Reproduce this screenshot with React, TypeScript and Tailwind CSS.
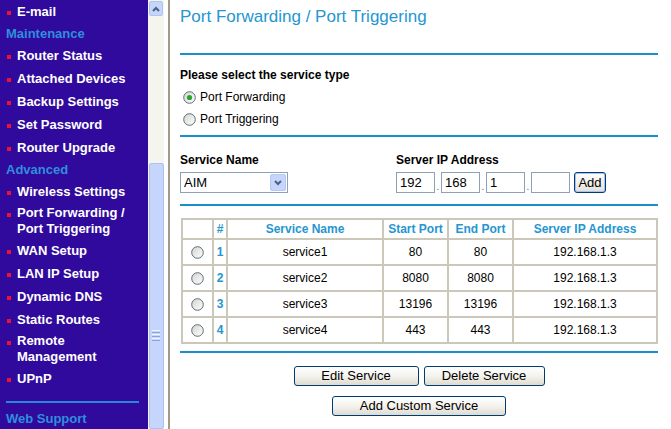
import React from 'react';

type NavEntry =
  | { kind: 'item'; lines: string[] }
  | { kind: 'head'; label: string };

const nav: NavEntry[] = [
  { kind: 'item', lines: ['E-mail'] },
  { kind: 'head', label: 'Maintenance' },
  { kind: 'item', lines: ['Router Status'] },
  { kind: 'item', lines: ['Attached Devices'] },
  { kind: 'item', lines: ['Backup Settings'] },
  { kind: 'item', lines: ['Set Password'] },
  { kind: 'item', lines: ['Router Upgrade'] },
  { kind: 'head', label: 'Advanced' },
  { kind: 'item', lines: ['Wireless Settings'] },
  { kind: 'item', lines: ['Port Forwarding /', 'Port Triggering'] },
  { kind: 'item', lines: ['WAN Setup'] },
  { kind: 'item', lines: ['LAN IP Setup'] },
  { kind: 'item', lines: ['Dynamic DNS'] },
  { kind: 'item', lines: ['Static Routes'] },
  { kind: 'item', lines: ['Remote', 'Management'] },
  { kind: 'item', lines: ['UPnP'] },
];

const services = [
  { id: 1, name: 'service1', start: '80', end: '80', ip: '192.168.1.3' },
  { id: 2, name: 'service2', start: '8080', end: '8080', ip: '192.168.1.3' },
  { id: 3, name: 'service3', start: '13196', end: '13196', ip: '192.168.1.3' },
  { id: 4, name: 'service4', start: '443', end: '443', ip: '192.168.1.3' },
];

function Radio({ checked = false, id }: { checked?: boolean; id: string }) {
  return (
    <svg width="13" height="13" viewBox="0 0 13 13" className="shrink-0">
      <defs>
        <linearGradient id={`rg-${id}`} x1="0" y1="0" x2="1" y2="1">
          <stop offset="0" stopColor="#d4d4cc" />
          <stop offset="1" stopColor="#ffffff" />
        </linearGradient>
      </defs>
      <circle cx="6.5" cy="6.5" r="5.8" fill={`url(#rg-${id})`} stroke="#5d6b7c" strokeWidth="1" />
      {checked && <circle cx="6.5" cy="6.5" r="2.6" fill="#2ca52c" />}
    </svg>
  );
}

function Sidebar() {
  return (
    <nav className="w-[148px] shrink-0 bg-[#300a9c] text-white text-[13px] font-bold flex flex-col">
      {nav.map((n, i) =>
        n.kind === 'head' ? (
          <div key={i} className="h-[21px] pt-[2px] pl-[6px] leading-[17px] text-[#2f8fdc]">
            {n.label}
          </div>
        ) : n.lines.length === 1 ? (
          <div key={i} className="h-[23px] pt-[3px] leading-[17px] flex items-start">
            <span className="ml-[7px] mt-[8px] w-[4px] h-[4px] bg-[#ee1133] shrink-0" />
            <span className="ml-[6px]">{n.lines[0]}</span>
          </div>
        ) : (
          <div key={i} className="h-[36px] py-[2px] leading-[16px] flex items-start">
            <span className="ml-[7px] mt-[8px] w-[4px] h-[4px] bg-[#ee1133] shrink-0" />
            <span className="ml-[6px] flex flex-col">
              {n.lines.map((l) => (
                <span key={l}>{l}</span>
              ))}
            </span>
          </div>
        )
      )}
      <div className="mt-[11px] ml-[6px] w-[133px] h-[2px] bg-[#2a86d8]" />
      <div className="mt-[5px] h-[21px] pt-[2px] pl-[6px] leading-[17px] text-[#2f8fdc]">Web Support</div>
    </nav>
  );
}

function FrameScrollbar() {
  return (
    <div className="w-[16px] shrink-0 bg-[#f5f4ef] flex flex-col items-center">
      <div className="mt-[1px] w-[14px] h-[15px] rounded-[2px] bg-[#c6d5fb] border border-[#b0c4f2] flex items-center justify-center">
        <svg width="8" height="6" viewBox="0 0 8 6">
          <path d="M1 5 L4 2 L7 5" fill="none" stroke="#4d6185" strokeWidth="2" />
        </svg>
      </div>
      <div className="mt-[147px] w-[15px] flex-1 rounded-[2px] bg-[#c6d5fb] border border-[#aec2f2] flex flex-col items-center">
        <div className="mt-[166px] flex flex-col gap-[1px]">
          <div className="w-[8px] h-[1px] bg-[#eef3ff]" />
          <div className="w-[8px] h-[1px] bg-[#8ca4de]" />
          <div className="w-[8px] h-[1px] bg-[#eef3ff]" />
          <div className="w-[8px] h-[1px] bg-[#8ca4de]" />
          <div className="w-[8px] h-[1px] bg-[#eef3ff]" />
          <div className="w-[8px] h-[1px] bg-[#8ca4de]" />
        </div>
      </div>
    </div>
  );
}

function XpButton({ label, width }: { label: string; width: string }) {
  return (
    <button
      className={`${width} h-[20px] rounded-[3px] border border-[#003c74] bg-gradient-to-b from-white via-[#f4f3ee] to-[#dedbd0] text-[13px] leading-[18px] text-black`}
    >
      {label}
    </button>
  );
}

function IpBox({ value }: { value: string }) {
  return (
    <div className="w-[39px] h-[21px] border border-[#8da2b8] bg-white pl-[3px] text-[13px] leading-[19px] text-black">
      {value}
    </div>
  );
}

function Dot() {
  return <span className="w-[6px] h-[21px] flex items-end justify-center text-[10px] leading-[12px] text-[#666]">.</span>;
}

function Rule() {
  return <div className="h-[2px] bg-[#1b8fca]" />;
}

export default function App() {
  return (
    <div className="w-[671px] h-[429px] flex overflow-hidden bg-white font-['Liberation_Sans',Arial,sans-serif]">
      <Sidebar />
      <FrameScrollbar />
      <div className="w-[4px] shrink-0 bg-white" />
      <div className="w-[2px] shrink-0 bg-[#a29a85]" />

      <main className="flex-1 bg-white pl-[10px] pr-[13px] flex flex-col text-black">
        <div className="h-[53px] pt-[7px]">
          <h1 className="text-[17px] leading-[20px] text-[#2596d0]">Port Forwarding / Port Triggering</h1>
        </div>
        <Rule />

        <div className="pt-[12px] pb-[5px]">
          <div className="h-[16px] leading-[16px] text-[12px] font-bold">Please select the service type</div>
          <div className="mt-[3px] h-[22px] flex items-center pl-[3px] gap-[4px] text-[12px]">
            <Radio checked id="pf" />
            <span>Port Forwarding</span>
          </div>
          <div className="h-[22px] flex items-center pl-[3px] gap-[4px] text-[12px]">
            <Radio id="pt" />
            <span>Port Triggering</span>
          </div>
        </div>
        <Rule />

        <div className="pt-[15px] pb-[11px] flex">
          <div className="w-[216px]">
            <div className="h-[16px] leading-[16px] text-[12px] font-bold">Service Name</div>
            <div className="mt-[4px] w-[108px] h-[21px] border border-[#8da2b8] bg-white flex items-center justify-between pl-[3px] pr-[1px]">
              <span className="text-[13px]">AIM</span>
              <span className="w-[16px] h-[17px] rounded-[2px] bg-[#c6d5fb] border border-[#b6c9f5] flex items-center justify-center">
                <svg width="8" height="6" viewBox="0 0 8 6">
                  <path d="M1 1 L4 4 L7 1" fill="none" stroke="#4d6185" strokeWidth="2" />
                </svg>
              </span>
            </div>
          </div>
          <div>
            <div className="h-[16px] leading-[16px] text-[12px] font-bold">Server IP Address</div>
            <div className="mt-[4px] flex items-center">
              <IpBox value="192" />
              <Dot />
              <IpBox value="168" />
              <Dot />
              <IpBox value="1" />
              <Dot />
              <IpBox value="" />
              <button className="ml-[4px] w-[32px] h-[21px] rounded-[3px] border border-[#003c74] bg-gradient-to-b from-white to-[#e3e1d6] text-[13px] leading-[17px] shadow-[inset_0_0_0_1px_#a9c1ef]">
                Add
              </button>
            </div>
          </div>
        </div>
        <Rule />

        <table className="mt-[12px] ml-[1px] w-[477px] table-fixed border-separate border-spacing-0 border border-[#cbc7b9] text-[12px]">
          <colgroup>
            <col className="w-[31px]" />
            <col className="w-[14px]" />
            <col className="w-[156px]" />
            <col className="w-[65px]" />
            <col className="w-[65px]" />
            <col className="w-[144px]" />
          </colgroup>
          <thead>
            <tr className="h-[20px] text-[#2596d0] font-bold">
              <th className="border border-[#cbc7b9] p-0" />
              <th className="border border-[#cbc7b9] p-0">#</th>
              <th className="border border-[#cbc7b9] p-0">Service Name</th>
              <th className="border border-[#cbc7b9] p-0">Start Port</th>
              <th className="border border-[#cbc7b9] p-0">End Port</th>
              <th className="border border-[#cbc7b9] p-0">Server IP Address</th>
            </tr>
          </thead>
          <tbody>
            {services.map((s) => (
              <tr key={s.id} className="h-[26px] text-center">
                <td className="border border-[#cbc7b9] p-0">
                  <div className="flex justify-center">
                    <Radio id={`row${s.id}`} />
                  </div>
                </td>
                <td className="border border-[#cbc7b9] p-0 font-bold text-[#2596d0]">{s.id}</td>
                <td className="border border-[#cbc7b9] p-0">{s.name}</td>
                <td className="border border-[#cbc7b9] p-0">{s.start}</td>
                <td className="border border-[#cbc7b9] p-0">{s.end}</td>
                <td className="border border-[#cbc7b9] p-0">{s.ip}</td>
              </tr>
            ))}
          </tbody>
        </table>

        <div className="mt-[7px]">
          <Rule />
        </div>

        <div className="mt-[13px] flex justify-center gap-[5px]">
          <XpButton label="Edit Service" width="w-[125px]" />
          <XpButton label="Delete Service" width="w-[121px]" />
        </div>
        <div className="mt-[10px] flex justify-center">
          <XpButton label="Add Custom Service" width="w-[174px]" />
        </div>
      </main>
    </div>
  );
}
